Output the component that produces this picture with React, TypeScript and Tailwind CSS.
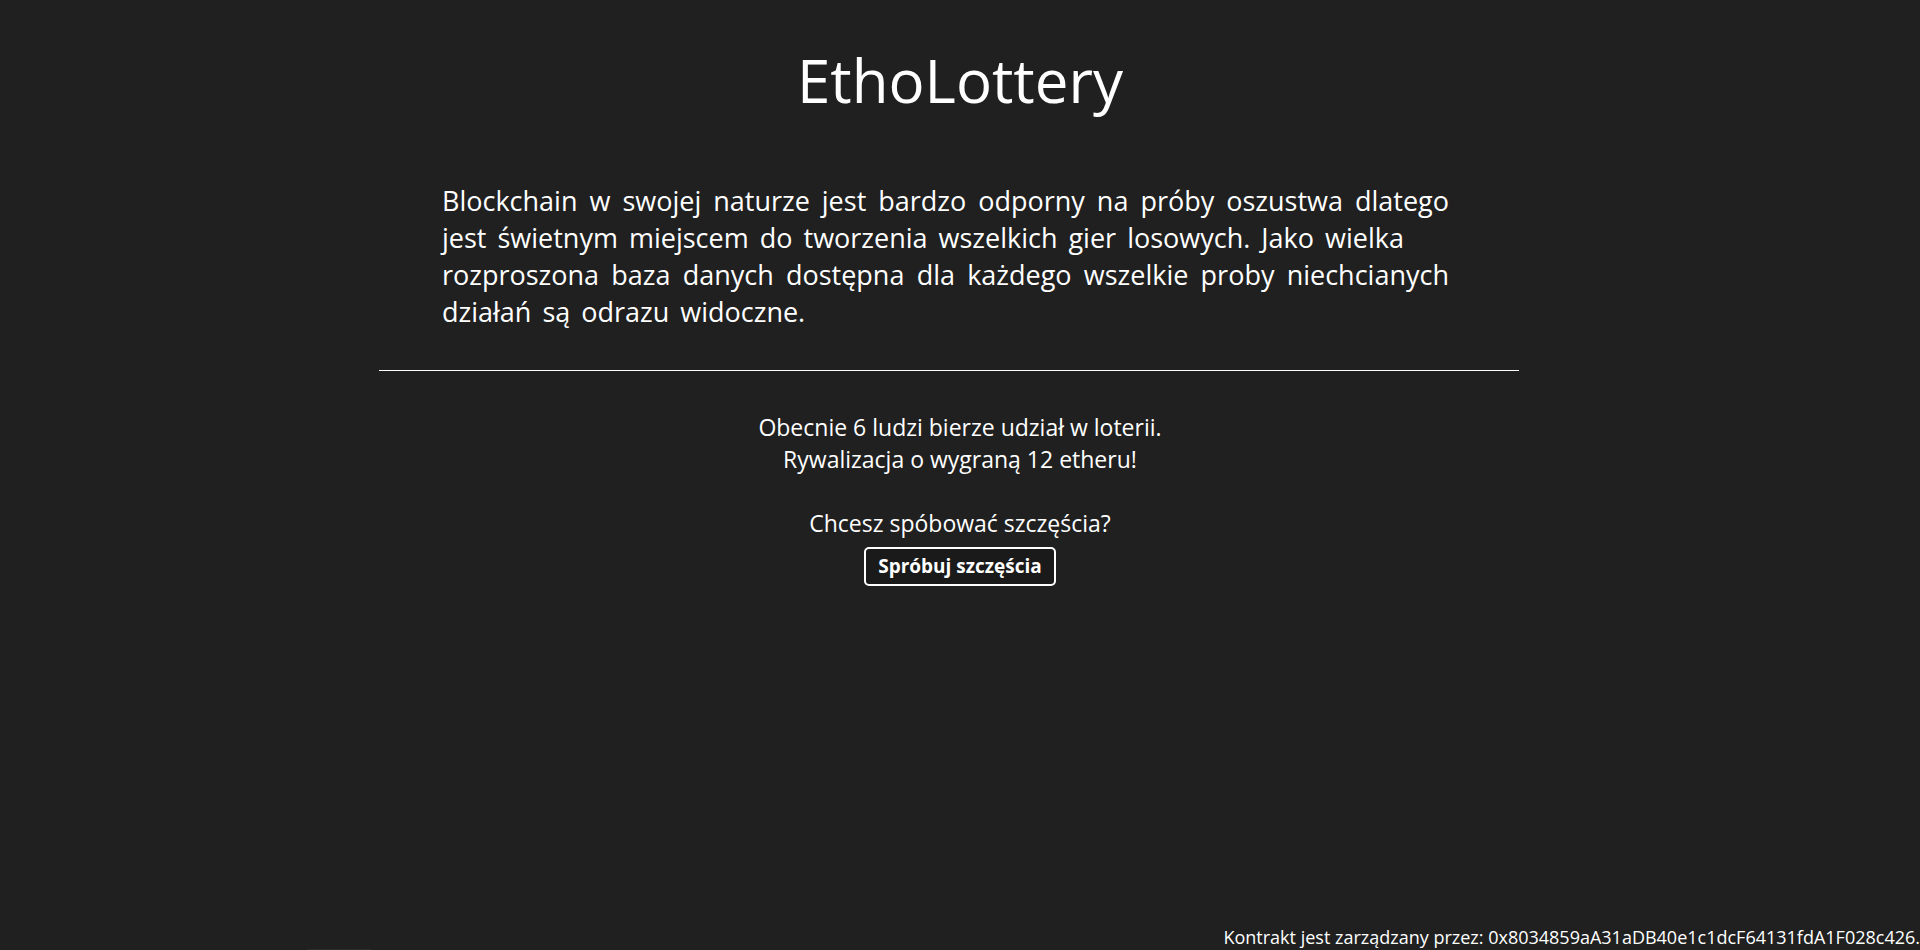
export default function App() {
  return (
    <div
      className="relative min-h-screen flex flex-col bg-[#202020] text-white"
      style={{ fontFamily: '"Open Sans", "Noto Sans", sans-serif' }}
    >
      <h1 className="pt-[39px] text-center text-[60px] leading-[82px] font-normal">
        EthoLottery
      </h1>

      <div className="ml-[379px] w-[1140px]">
        <p className="mt-[61px] pl-[63px] pr-[70px] text-[27px] leading-[37px] text-justify [word-spacing:4px]">
          Blockchain w swojej naturze jest bardzo odporny na próby oszustwa
          dlatego jest świetnym miejscem do tworzenia wszelkich gier losowych.
          Jako wielka <br />
          rozproszona baza danych dostępna dla każdego wszelkie proby
          niechcianych działań są odrazu widoczne.
        </p>
        <hr className="mt-[40px] border-t border-white" />
      </div>

      <div className="mt-[40px] flex flex-col items-center text-[23px] leading-[32px]">
        <p className="text-center">
          Obecnie 6 ludzi bierze udział w loterii.
          <br />
          Rywalizacja o wygraną 12 etheru!
          <br />
          <br />
          Chcesz spóbować szczęścia?
        </p>
        <button className="mt-[8px] h-[39px] px-[12px] rounded-[5px] border-2 border-white bg-[#1a1a1a] text-[19px] font-bold leading-none">
          Spróbuj szczęścia
        </button>
      </div>

      <div className="mt-auto self-end whitespace-nowrap text-[18px] leading-[25px]">
        Kontrakt jest zarządzany przez: 0x8034859aA31aDB40e1c1dcF64131fdA1F028c426.
      </div>

      <div className="absolute bottom-0 left-[307px] w-[64px] h-px bg-[#2c2c2c]" />
    </div>
  );
}
